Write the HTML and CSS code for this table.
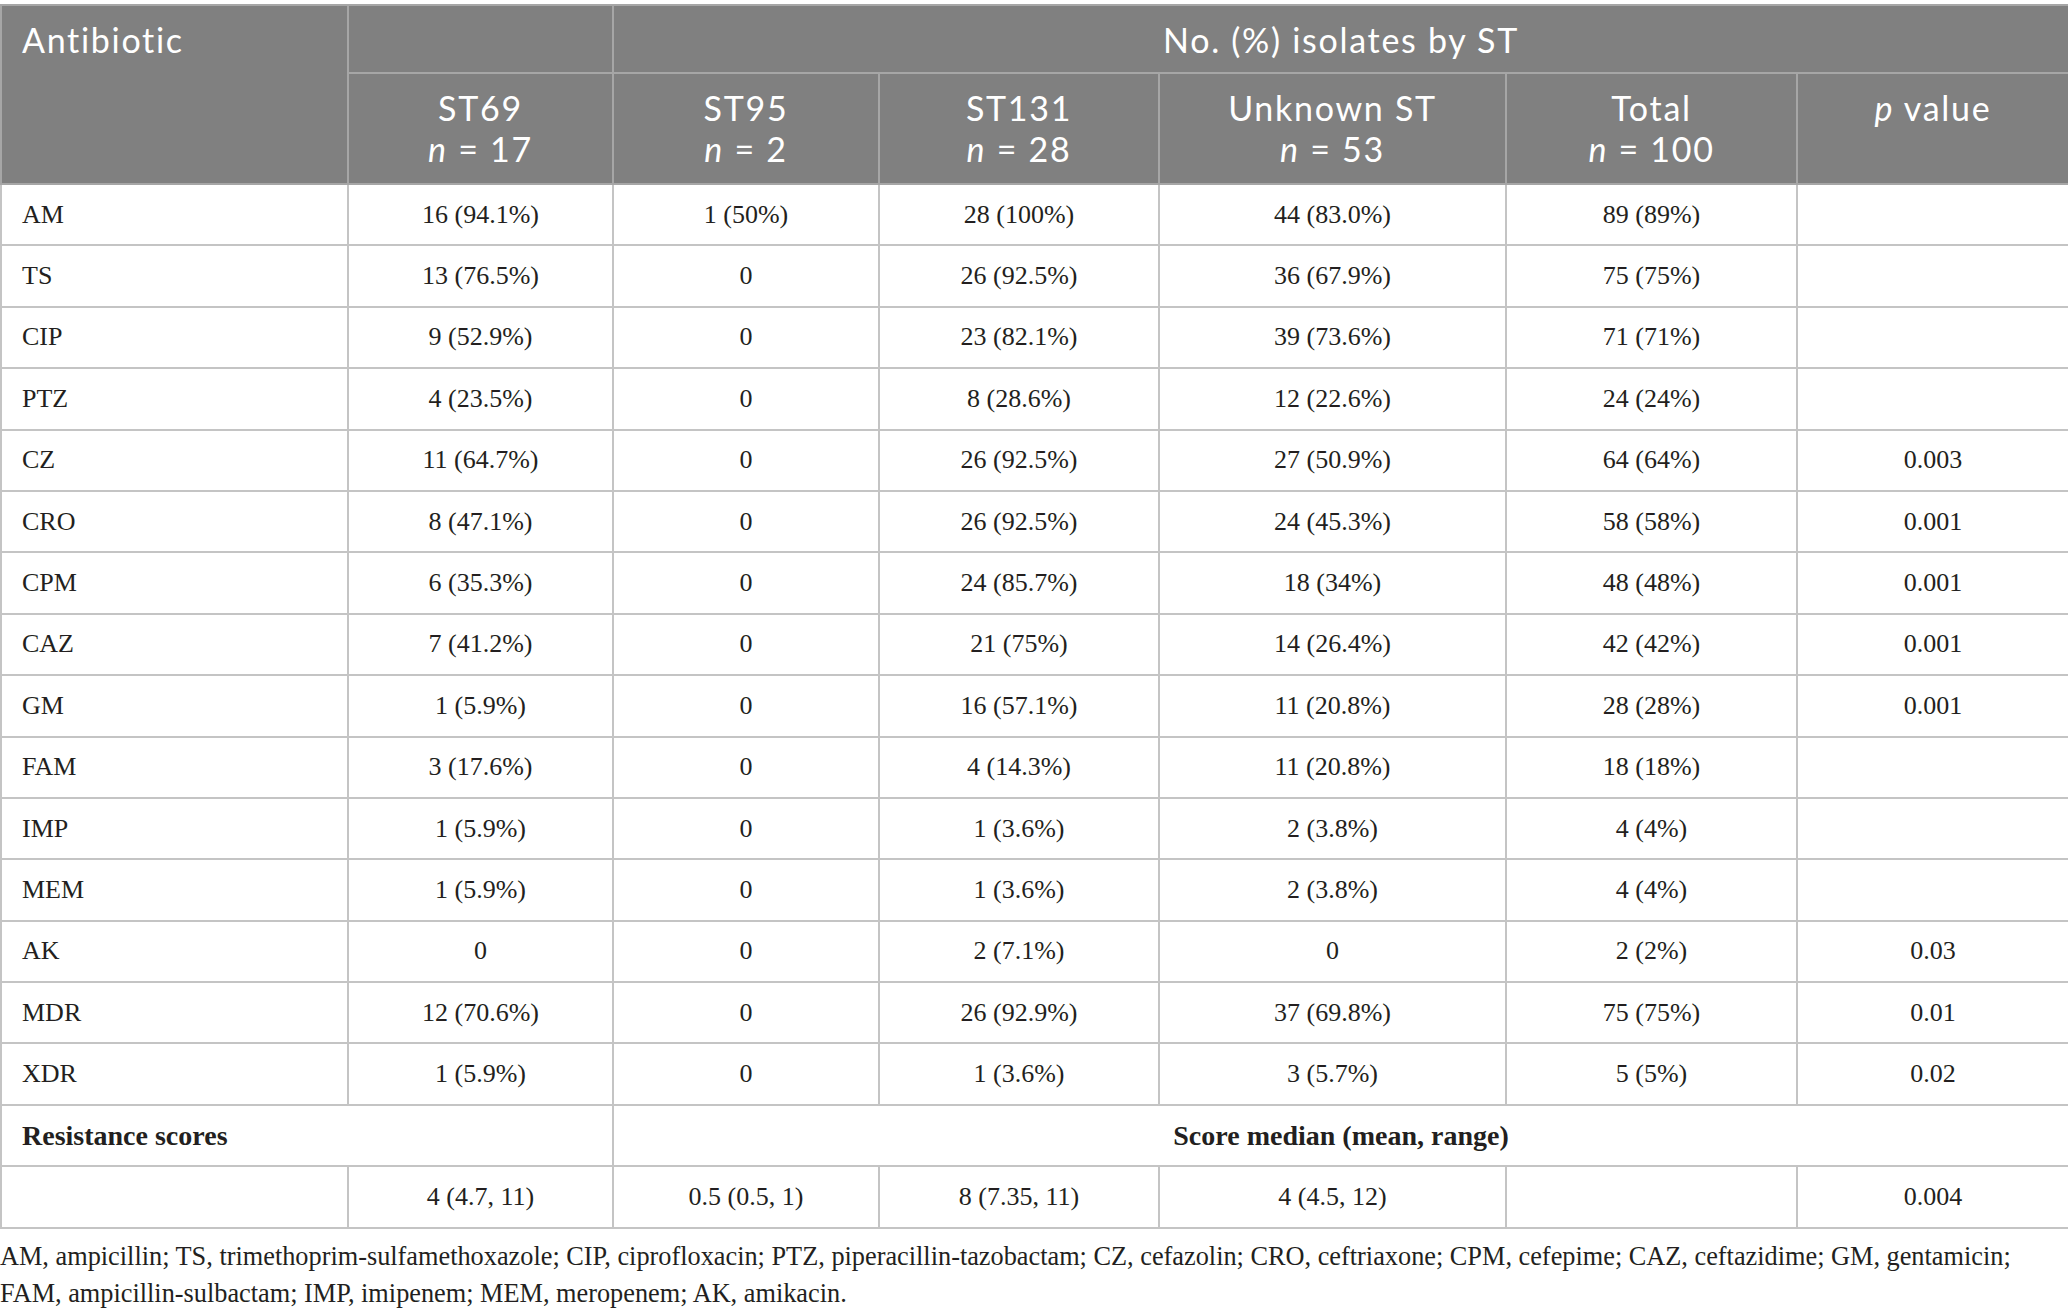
FILE: index.html
```
<html lang="en">

<head>
    <title>Isolates by ST</title>
    <link rel="stylesheet" href="styles.css">
</head>

<body>
    <table class="data">
        <colgroup>
            <col class="c1">
            <col class="c2">
            <col class="c3">
            <col class="c4">
            <col class="c5">
            <col class="c6">
            <col class="c7">
        </colgroup>
        <thead>
            <tr class="h1">
                <th rowspan="2" class="left">Antibiotic</th>
                <th></th>
                <th colspan="5">No. (%) isolates by ST</th>
            </tr>
            <tr class="h2">
                <th>ST69<br><i>n</i> = 17</th>
                <th>ST95<br><i>n</i> = 2</th>
                <th>ST131<br><i>n</i> = 28</th>
                <th>Unknown ST<br><i>n</i> = 53</th>
                <th>Total<br><i>n</i> = 100</th>
                <th><i>p</i> value</th>
            </tr>
        </thead>
        <tbody>
            <tr><td class="left">AM</td><td>16 (94.1%)</td><td>1 (50%)</td><td>28 (100%)</td><td>44 (83.0%)</td><td>89 (89%)</td><td></td></tr>
            <tr><td class="left">TS</td><td>13 (76.5%)</td><td>0</td><td>26 (92.5%)</td><td>36 (67.9%)</td><td>75 (75%)</td><td></td></tr>
            <tr><td class="left">CIP</td><td>9 (52.9%)</td><td>0</td><td>23 (82.1%)</td><td>39 (73.6%)</td><td>71 (71%)</td><td></td></tr>
            <tr><td class="left">PTZ</td><td>4 (23.5%)</td><td>0</td><td>8 (28.6%)</td><td>12 (22.6%)</td><td>24 (24%)</td><td></td></tr>
            <tr><td class="left">CZ</td><td>11 (64.7%)</td><td>0</td><td>26 (92.5%)</td><td>27 (50.9%)</td><td>64 (64%)</td><td>0.003</td></tr>
            <tr><td class="left">CRO</td><td>8 (47.1%)</td><td>0</td><td>26 (92.5%)</td><td>24 (45.3%)</td><td>58 (58%)</td><td>0.001</td></tr>
            <tr><td class="left">CPM</td><td>6 (35.3%)</td><td>0</td><td>24 (85.7%)</td><td>18 (34%)</td><td>48 (48%)</td><td>0.001</td></tr>
            <tr><td class="left">CAZ</td><td>7 (41.2%)</td><td>0</td><td>21 (75%)</td><td>14 (26.4%)</td><td>42 (42%)</td><td>0.001</td></tr>
            <tr><td class="left">GM</td><td>1 (5.9%)</td><td>0</td><td>16 (57.1%)</td><td>11 (20.8%)</td><td>28 (28%)</td><td>0.001</td></tr>
            <tr><td class="left">FAM</td><td>3 (17.6%)</td><td>0</td><td>4 (14.3%)</td><td>11 (20.8%)</td><td>18 (18%)</td><td></td></tr>
            <tr><td class="left">IMP</td><td>1 (5.9%)</td><td>0</td><td>1 (3.6%)</td><td>2 (3.8%)</td><td>4 (4%)</td><td></td></tr>
            <tr><td class="left">MEM</td><td>1 (5.9%)</td><td>0</td><td>1 (3.6%)</td><td>2 (3.8%)</td><td>4 (4%)</td><td></td></tr>
            <tr><td class="left">AK</td><td>0</td><td>0</td><td>2 (7.1%)</td><td>0</td><td>2 (2%)</td><td>0.03</td></tr>
            <tr><td class="left">MDR</td><td>12 (70.6%)</td><td>0</td><td>26 (92.9%)</td><td>37 (69.8%)</td><td>75 (75%)</td><td>0.01</td></tr>
            <tr><td class="left">XDR</td><td>1 (5.9%)</td><td>0</td><td>1 (3.6%)</td><td>3 (5.7%)</td><td>5 (5%)</td><td>0.02</td></tr>
            <tr class="bold"><td colspan="2" class="left">Resistance scores</td><td colspan="5">Score median (mean, range)</td></tr>
            <tr><td></td><td>4 (4.7, 11)</td><td>0.5 (0.5, 1)</td><td>8 (7.35, 11)</td><td>4 (4.5, 12)</td><td></td><td>0.004</td></tr>
        </tbody>
    </table>
    <p class="note">AM, ampicillin; TS, trimethoprim-sulfamethoxazole; CIP, ciprofloxacin; PTZ, piperacillin-tazobactam; CZ, cefazolin; CRO, ceftriaxone; CPM, cefepime; CAZ, ceftazidime; GM, gentamicin;<br>FAM, ampicillin-sulbactam; IMP, imipenem; MEM, meropenem; AK, amikacin.</p>
</body>

</html>
```
FILE: styles.css
```
body {
    margin: 0;
    padding-top: 4px;
    background: white;
    font-family: 'Liberation Serif', serif;
    color: #231f20;
}

.data {
    width: 2068px;
    border-collapse: collapse;
    table-layout: fixed;
    border: 2px solid #c4c4c4;
}

.c1 { width: 347px; }
.c2 { width: 265px; }
.c3 { width: 266px; }
.c4 { width: 280px; }
.c5 { width: 347px; }
.c6 { width: 291px; }
.c7 { width: 272px; }

th {
    background: #808080;
    color: white;
    font-family: Lato, sans-serif;
    font-weight: 400;
    font-size: 34px;
    line-height: 41px;
    letter-spacing: 1.7px;
    text-align: center;
    vertical-align: top;
    padding: 13px 10px 0;
    border: 2px solid #a6a6a6;
}

.h1 th {
    height: 68px;
}

.h2 th {
    height: 111px;
}

td {
    height: 61.4px;
    padding: 0 10px;
    font-size: 26px;
    text-align: center;
    vertical-align: middle;
    border: 2px solid #c4c4c4;
}

.left {
    text-align: left;
    padding-left: 20px;
}

.bold td {
    font-weight: bold;
    font-size: 28px;
}

.note {
    margin: 9px 0 0;
    font-size: 26.3px;
    line-height: 37px;
    color: #231f20;
}
```
